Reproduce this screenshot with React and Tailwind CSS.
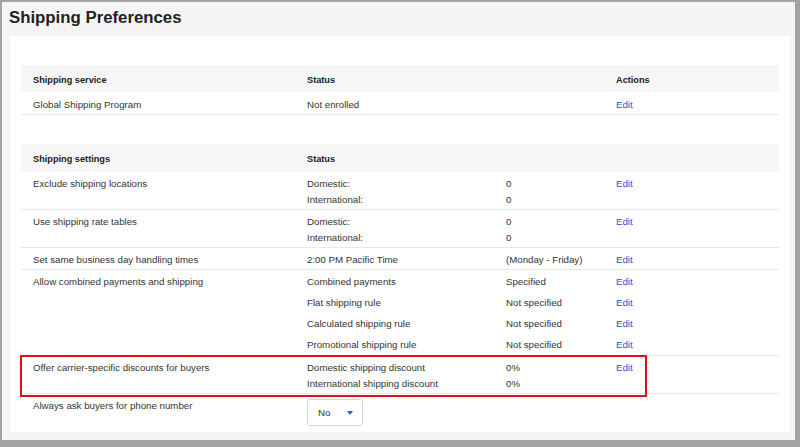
import React from 'react';

// Rows of the "Shipping settings" table
const settingsRows = [
    { label: 'Exclude shipping locations', lines: [['Domestic:', '0'], ['International:', '0']], edit: true },
    { label: 'Use shipping rate tables', lines: [['Domestic:', '0'], ['International:', '0']], edit: true },
    { label: 'Set same business day handling times', lines: [['2:00 PM Pacific Time', '(Monday - Friday)']], edit: true },
    {
        label: 'Allow combined payments and shipping',
        tall: true,
        lines: [
            ['Combined payments', 'Specified'],
            ['Flat shipping rule', 'Not specified'],
            ['Calculated shipping rule', 'Not specified'],
            ['Promotional shipping rule', 'Not specified'],
        ],
        editEach: true,
    },
    {
        label: 'Offer carrier-specific discounts for buyers',
        lines: [['Domestic shipping discount', '0%'], ['International shipping discount', '0%']],
        edit: true,
        highlight: true,
    },
];

const cols = 'grid grid-cols-[274px_199px_110px_1fr] pl-[12px]';

const HeaderRow = ({ first, second, last, tall }) => (
    <div className={`${cols} bg-[#f6f6f6] ${tall ? 'h-[28px]' : 'h-[27px]'} pt-[7px] leading-[16px] text-[9.2px] font-bold text-[#222]`}>
        <div>{first}</div>
        <div>{second}</div>
        <div></div>
        <div>{last}</div>
    </div>
);

const EditLink = () => <span className="text-[#1f5bc4]">Edit</span>;

const SettingRow = ({ row }) => {
    const spacing = row.tall ? 'pt-[1px] leading-[21px]' : 'pt-[4px] pb-[1px] leading-[16px]';
    return (
        <div className={`relative ${cols} ${spacing} border-b border-[#e8e8e8]`}>
            <div>{row.label}</div>
            <div>
                {row.lines.map((l, i) => <div key={i}>{l[0]}</div>)}
            </div>
            <div>
                {row.lines.map((l, i) => <div key={i}>{l[1]}</div>)}
            </div>
            <div>
                {row.editEach
                    ? row.lines.map((l, i) => <div key={i}><EditLink /></div>)
                    : row.edit && <div><EditLink /></div>}
            </div>
            {row.highlight && (
                <div className="absolute top-[-1px] left-[-1px] w-[627px] h-[42px] border-2 border-[#e3101b] pointer-events-none"></div>
            )}
        </div>
    );
};

export default function App() {
    return (
        <div
            className="w-[800px] h-[447px] border-l-2 border-t-2 border-r-[5px] border-b-[7px] border-[#a3a3a3] bg-[#f5f5f5] flex flex-col text-[#333]"
            style={{ fontFamily: '"Liberation Sans", Arial, sans-serif' }}
        >
            <div className="h-[34px] pt-[6px] pl-[7px] text-[16.8px] leading-[20px] font-bold text-[#222]">
                Shipping Preferences
            </div>

            <div className="flex-1 ml-[8px] mr-[5px] mb-[8px] bg-white px-[11px] pt-[29px] text-[9.7px]">
                {/* Shipping service table */}
                <HeaderRow first="Shipping service" second="Status" last="Actions" />
                <div className={`${cols} h-[23px] pt-[5px] leading-[16px] border-b border-[#e8e8e8]`}>
                    <div>Global Shipping Program</div>
                    <div>Not enrolled</div>
                    <div></div>
                    <div><EditLink /></div>
                </div>

                {/* Shipping settings table */}
                <div className="mt-[29px]">
                    <HeaderRow first="Shipping settings" second="Status" tall />
                    {settingsRows.map((row) => (
                        <SettingRow key={row.label} row={row} />
                    ))}
                    <div className={`${cols} pt-[4px] leading-[16px]`}>
                        <div>Always ask buyers for phone number</div>
                        <div className="pt-[1px]">
                            <div className="w-[56px] h-[27px] border border-[#d6d6d6] rounded-[3px] flex items-center pl-[10px] gap-[17px]">
                                <span className="text-[#333]">No</span>
                                <svg width="6" height="4" viewBox="0 0 6 4">
                                    <path d="M0 0 L6 0 L3 4 Z" fill="#3665b3" />
                                </svg>
                            </div>
                        </div>
                        <div></div>
                        <div></div>
                    </div>
                </div>
            </div>
        </div>
    );
}
